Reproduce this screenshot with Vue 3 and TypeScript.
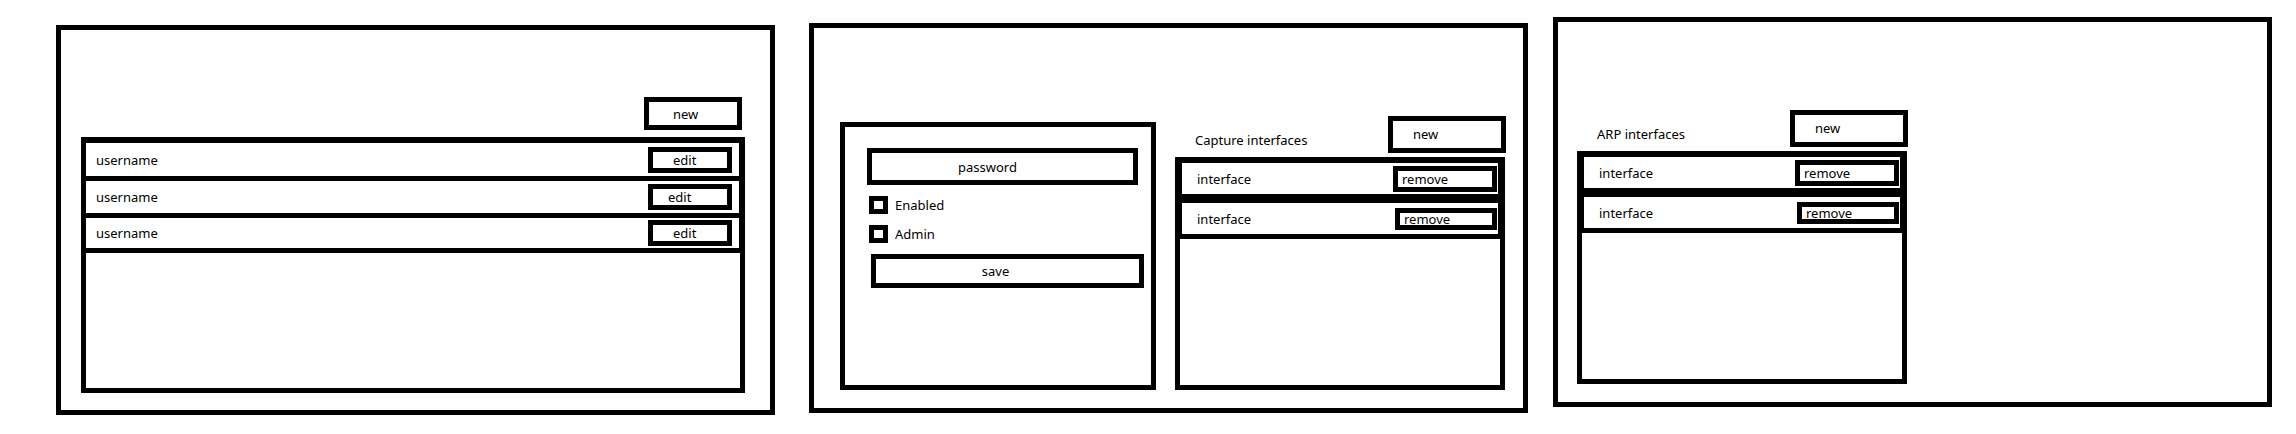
<script setup lang="ts">
import { ref } from 'vue'

interface InterfaceGroup {
  title: string
  items: string[]
}

const users = ref<string[]>(['username', 'username', 'username'])
const capture = ref<InterfaceGroup>({
  title: 'Capture interfaces',
  items: ['interface', 'interface'],
})
const arp = ref<InterfaceGroup>({
  title: 'ARP interfaces',
  items: ['interface', 'interface'],
})

const password = ref('')
const enabled = ref(false)
const admin = ref(false)

function addUser(): void {
  users.value.push('username')
}

function addInterface(group: InterfaceGroup): void {
  group.items.push('interface')
}

function removeInterface(group: InterfaceGroup, index: number): void {
  group.items.splice(index, 1)
}
</script>

<template>
  <main class="board">
    <section class="screen users">
      <header class="bar users-bar">
        <button type="button" class="box new-user" @click="addUser">new</button>
      </header>
      <ul class="list user-list">
        <li v-for="(user, i) in users" :key="i" class="row">
          <span>{{ user }}</span>
          <button type="button" class="box edit">edit</button>
        </li>
      </ul>
    </section>

    <section class="screen details">
      <form class="form" @submit.prevent>
        <input
          v-model="password"
          class="box password"
          type="password"
          placeholder="password"
          aria-label="password"
        />
        <label class="check">
          <input v-model="enabled" type="checkbox" />
          <span>Enabled</span>
        </label>
        <label class="check">
          <input v-model="admin" type="checkbox" />
          <span>Admin</span>
        </label>
        <button type="submit" class="box save">save</button>
      </form>

      <div class="group">
        <header class="bar group-bar">
          <h2>{{ capture.title }}</h2>
          <button type="button" class="box new-interface" @click="addInterface(capture)">new</button>
        </header>
        <ul class="list interface-list">
          <li v-for="(item, i) in capture.items" :key="i" class="row">
            <span>{{ item }}</span>
            <button type="button" class="box remove" @click="removeInterface(capture, i)">remove</button>
          </li>
        </ul>
      </div>
    </section>

    <section class="screen arp">
      <div class="group">
        <header class="bar group-bar">
          <h2>{{ arp.title }}</h2>
          <button type="button" class="box new-interface" @click="addInterface(arp)">new</button>
        </header>
        <ul class="list interface-list">
          <li v-for="(item, i) in arp.items" :key="i" class="row">
            <span>{{ item }}</span>
            <button type="button" class="box remove" @click="removeInterface(arp, i)">remove</button>
          </li>
        </ul>
      </div>
    </section>
  </main>
</template>

<style>
body {
  margin: 0;
  background: #fff;
}
</style>

<style scoped>
.board,
.board * {
  box-sizing: border-box;
}

.board {
  display: grid;
  grid-template-columns: minmax(0, 1fr) 34px minmax(0, 1fr) 25px minmax(0, 1fr);
  align-items: start;
  padding: 17px 24px 19px 56px;
  color: #000;
  font-family: 'Noto Sans', 'Open Sans', sans-serif;
  font-size: 13px;
  line-height: 18px;
}

.screen {
  border: 5px solid #000;
}

.users {
  grid-column: 1;
  margin-top: 8px;
  padding: 67px 25px 17px 20px;
}

.details {
  display: grid;
  grid-column: 3;
  grid-template-columns: 316fr 330fr;
  column-gap: 19px;
  margin-top: 6px;
  padding: 88px 18px 18px 26px;
}

.arp {
  display: grid;
  grid-column: 5;
  grid-template-columns: 330fr 360fr;
  padding: 88px 0 18px 19px;
}

.box {
  margin: 0;
  padding: 0;
  border: 5px solid #000;
  border-radius: 0;
  background: #fff;
  color: inherit;
  font: inherit;
  text-align: left;
}

button.box {
  cursor: pointer;
}

.bar {
  display: flex;
}

.users-bar {
  justify-content: flex-end;
  padding: 0 3px 7px 0;
}

.new-user {
  width: 98px;
  height: 33px;
  padding-left: 24px;
}

.group-bar {
  align-items: flex-end;
  justify-content: space-between;
  margin-right: -1px;
  padding-bottom: 4px;
}

.group-bar h2 {
  margin: 0;
  padding: 0 0 4px 20px;
  font-size: inherit;
  font-weight: 400;
}

.new-interface {
  width: 118px;
  height: 37px;
  padding: 0 0 2px 20px;
}

.list {
  margin: 0;
  padding: 0;
  border: 5px solid #000;
  list-style: none;
}

.row {
  display: flex;
  align-items: center;
  justify-content: space-between;
  border: 0 solid #000;
}

.user-list {
  min-height: 256px;
}

.user-list .row {
  height: 37px;
  padding: 0 7px 0 10px;
  border-right-width: 1px;
  border-bottom-width: 5px;
}

.user-list .row:first-child {
  height: 39px;
  border-top-width: 1px;
}

.user-list .row:last-child {
  height: 35px;
}

.edit {
  width: 84px;
  height: 26px;
  padding-left: 20px;
  line-height: 16px;
}

.row:nth-child(even) .edit {
  padding-left: 15px;
}

.interface-list {
  min-height: 233px;
}

.interface-list .row {
  height: 37px;
  padding: 0 1px 0 15px;
  border-width: 1px 2px 5px;
}

.interface-list .row:nth-child(even) {
  height: 40px;
  border-top-width: 4px;
}

.remove {
  width: 104px;
  height: 26px;
  padding-left: 4px;
  line-height: 16px;
}

.row:nth-child(even) .remove {
  width: 102px;
  height: 22px;
  line-height: 12px;
}

.form {
  display: flex;
  flex-direction: column;
  gap: 11px;
  margin-top: 6px;
  padding: 21px 7px 21px 22px;
  border: 5px solid #000;
}

.password {
  height: 37px;
  min-width: 0;
  margin-right: 6px;
  padding-right: 30px;
  text-align: center;
}

.password::placeholder {
  color: #000;
  opacity: 1;
}

.check {
  display: flex;
  align-items: center;
  align-self: flex-start;
  gap: 7px;
  margin-left: 2px;
}

.check input {
  appearance: none;
  width: 19px;
  height: 18px;
  margin: 0;
  border: 5px solid #000;
  background: #fff;
}

.check input:checked {
  background: #000;
}

.save {
  height: 34px;
  margin-left: 4px;
  padding-right: 24px;
  text-align: center;
}
</style>
